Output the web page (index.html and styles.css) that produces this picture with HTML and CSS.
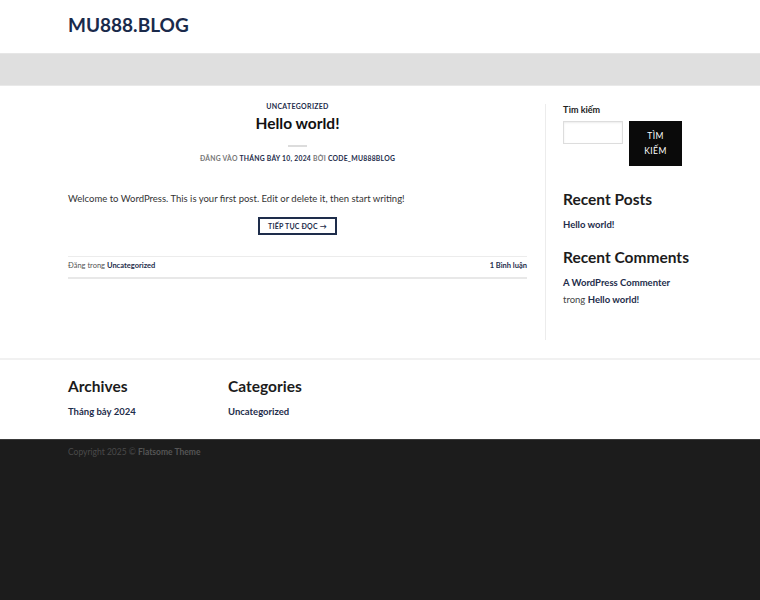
FILE: index.html
```html
<!DOCTYPE html>
<html lang="vi">
<head>
    <meta charset="UTF-8">
    <meta name="viewport" content="width=device-width, initial-scale=1.0">
    <title>MU888.BLOG</title>
    <link rel="stylesheet" href="styles.css">
</head>
<body>
    <header class="site-header">
        <div class="container">
            <a href="#" class="logo">MU888.BLOG</a>
        </div>
    </header>
    <div class="header-bottom"></div>

    <main class="page-wrapper">
        <div class="container row">
            <div class="content-area">
                <article class="post">
                    <div class="entry-header">
                        <h6 class="entry-category"><a href="#">Uncategorized</a></h6>
                        <h1 class="entry-title">Hello world!</h1>
                        <div class="entry-divider"></div>
                        <div class="entry-meta">Đăng vào <a href="#">Tháng Bảy 10, 2024</a> bởi <a href="#">code_mu888blog</a></div>
                    </div>
                    <div class="entry-content">
                        <p>Welcome to WordPress. This is your first post. Edit or delete it, then start writing!</p>
                        <div class="more-wrap">
                            <a href="#" class="more-link">Tiếp tục đọc <span class="arrow">&rarr;</span></a>
                        </div>
                    </div>
                    <footer class="entry-footer">
                        <span>Đăng trong <a href="#">Uncategorized</a></span>
                        <a href="#">1 Bình luận</a>
                    </footer>
                </article>
            </div>

            <aside class="sidebar">
                <div class="widget search-widget">
                    <label class="search-label">Tìm kiếm</label>
                    <form class="search-form" onsubmit="return false;">
                        <input type="search" class="search-field">
                        <button type="submit" class="search-btn">Tìm kiếm</button>
                    </form>
                </div>
                <div class="widget">
                    <h3 class="widget-title">Recent Posts</h3>
                    <ul class="widget-list">
                        <li><a href="#">Hello world!</a></li>
                    </ul>
                </div>
                <div class="widget">
                    <h3 class="widget-title">Recent Comments</h3>
                    <ul class="widget-list comments">
                        <li><a href="#">A WordPress Commenter</a> trong <a href="#">Hello world!</a></li>
                    </ul>
                </div>
            </aside>
        </div>
    </main>

    <section class="footer-widgets">
        <div class="container footer-row">
            <div class="footer-col">
                <h3 class="widget-title">Archives</h3>
                <ul class="widget-list">
                    <li><a href="#">Tháng bảy 2024</a></li>
                </ul>
            </div>
            <div class="footer-col">
                <h3 class="widget-title">Categories</h3>
                <ul class="widget-list">
                    <li><a href="#">Uncategorized</a></li>
                </ul>
            </div>
        </div>
    </section>

    <footer class="absolute-footer">
        <div class="container">
            <div class="copyright">Copyright 2025 &copy; <strong>Flatsome Theme</strong></div>
        </div>
    </footer>
</body>
</html>
```

FILE: styles.css
```css
html, body {
    margin: 0;
    padding: 0;
}

body {
    font-family: Lato, "Liberation Sans", sans-serif;
    color: #333333;
    background: #ffffff;
    display: flex;
    flex-direction: column;
    min-height: 100vh;
}

a {
    color: #1e2d4b;
    text-decoration: none;
    font-weight: bold;
}

.container {
    width: 624px;
    margin: 0 auto;
}

/* Header */
.site-header {
    height: 53px;
    background: #ffffff;
}

.site-header .container {
    height: 50px;
    display: flex;
    align-items: center;
}

.logo {
    font-size: 19px;
    font-weight: bold;
    color: #1a2a4b;
    line-height: 24px;
}

.header-bottom {
    height: 31px;
    background: #dfdfdf;
    border-top: 1px solid #e6e6e6;
    border-bottom: 1px solid #e9e9e9;
}

/* Main */
.page-wrapper {
    padding: 18px 0;
}

.row {
    display: grid;
    grid-template-columns: 477px 147px;
}

.content-area {
    padding-right: 18px;
}

.entry-header {
    text-align: center;
}

.entry-category {
    margin: -1px 0 0;
    font-size: 7px;
    line-height: 6px;
    text-transform: uppercase;
    letter-spacing: 0.3px;
}

.entry-category a {
    color: #1e2d4b;
}

.entry-title {
    margin: 5px 0 0;
    font-size: 15.5px;
    line-height: 18px;
    font-weight: bold;
    color: #111111;
}

.entry-divider {
    width: 19px;
    height: 2px;
    margin: 13px auto 0;
    background: #dcdcdc;
}

.entry-meta {
    margin-top: 6px;
    font-size: 6.8px;
    line-height: 10px;
    font-weight: bold;
    text-transform: uppercase;
    letter-spacing: 0.25px;
    color: #777777;
}

.entry-content p {
    margin: 29px 0 0;
    font-size: 9.5px;
    line-height: 14px;
}

.more-wrap {
    margin-top: 11px;
    display: flex;
    justify-content: center;
}

.more-link {
    display: block;
    padding: 2px 8px;
    border: 2px solid #1e2d4b;
    font-size: 7px;
    line-height: 10px;
    text-transform: uppercase;
    letter-spacing: 0.2px;
}

.entry-footer {
    margin-top: 21px;
    padding: 4px 0 6px;
    border-top: 1px solid #ececec;
    border-bottom: 2px solid #e8e8e8;
    display: flex;
    justify-content: space-between;
    font-size: 7.5px;
    line-height: 10px;
    color: #555555;
}

/* Sidebar */
.sidebar {
    border-left: 1px solid #ececec;
    padding: 0 0 32px 17px;
}

.search-label {
    display: block;
    font-size: 9px;
    line-height: 12px;
    font-weight: bold;
    color: #222222;
}

.search-form {
    margin-top: 5px;
    display: flex;
    align-items: flex-start;
    gap: 6px;
}

.search-field {
    width: 60px;
    height: 23px;
    box-sizing: border-box;
    border: 1px solid #dddddd;
    box-shadow: inset 0 1px 2px rgba(0, 0, 0, 0.08);
    margin: 0;
    padding: 0;
    background: #ffffff;
}

.search-btn {
    width: 53px;
    height: 45px;
    padding: 0 10px;
    margin: 0;
    border: none;
    background: #0a0a0a;
    color: #ffffff;
    font-family: Lato, "Liberation Sans", sans-serif;
    font-size: 8.5px;
    line-height: 15px;
    letter-spacing: 0.4px;
    text-transform: uppercase;
}

.widget-title {
    margin: 24px 0 0;
    font-size: 15.5px;
    line-height: 18px;
    font-weight: bold;
    color: #1c1c1c;
}

.widget-list {
    list-style: none;
    margin: 10px 0 0;
    padding: 0;
    font-size: 9.5px;
    line-height: 14px;
}

.widget + .widget .widget-title {
    margin-top: 16px;
}

.search-widget + .widget .widget-title {
    margin-top: 24px;
}

.widget-list.comments {
    margin-top: 8px;
    line-height: 17px;
    color: #444444;
}

/* Footer */
.footer-widgets {
    border-top: 2px solid #f1f1f1;
    padding: 17px 0 20px;
}

.footer-row {
    display: grid;
    grid-template-columns: 160px 160px;
}

.footer-widgets .widget-title {
    margin-top: 0;
}

.footer-widgets .widget-list {
    margin-top: 10px;
}

.absolute-footer {
    flex: 1;
    background: #1c1c1c;
    border-top: 1px solid #3a3a3a;
    padding-top: 6px;
}

.copyright {
    font-size: 8.5px;
    line-height: 12px;
    color: #4a4a4a;
}

.copyright strong {
    color: #555555;
}
```
